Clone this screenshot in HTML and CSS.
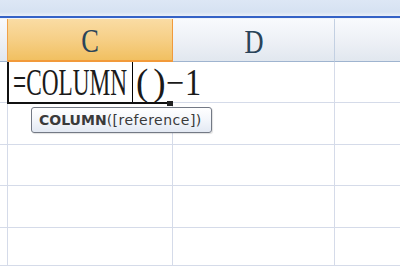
FILE: index.html
```html
<!DOCTYPE html>
<html>
<head>
<meta charset="utf-8">
<link rel="stylesheet" href="styles.css">
</head>
<body>
<div class="sheet">
  <div class="ribbon"></div>
  <div class="grid">
    <div class="cell hd"></div>
    <div class="cell hd hd-sel"><span class="hl">C</span></div>
    <div class="cell hd"><span class="hl">D</span></div>
    <div class="cell hd hd-last"></div>

    <div class="cell"></div>
    <div class="cell c-edit">
      <div class="entry">
        <span class="seg s1"><span class="sq">=COLUMN</span></span>
        <span class="caret"></span>
        <span class="seg s2"><span>(</span><span>)</span></span>
        <span class="seg s3"><span class="sq3">−1</span></span>
      </div>
    </div>
    <div class="cell"></div>
    <div class="cell last"></div>

    <div class="cell"></div><div class="cell"></div><div class="cell"></div><div class="cell last"></div>
    <div class="cell"></div><div class="cell"></div><div class="cell"></div><div class="cell last"></div>
    <div class="cell"></div><div class="cell"></div><div class="cell"></div><div class="cell last"></div>
    <div class="cell"></div><div class="cell"></div><div class="cell"></div><div class="cell last"></div>
  </div>

  <div class="active"></div>
  <div class="handle"></div>
  <div class="tip"><b>COLUMN</b><span class="args">([reference])</span></div>
</div>
</body>
</html>
```

FILE: styles.css
```css
html, body {
  margin: 0;
  padding: 0;
  background: #ffffff;
}
.sheet {
  position: relative;
  width: 400px;
  height: 266px;
  overflow: hidden;
  background: #ffffff;
}
.ribbon {
  height: 16px;
  background: linear-gradient(#dde7f5, #d6e2f2 75%, #e9eff8);
  border-bottom: 2px solid #3462c6;
  box-shadow: 0 1px 0 #eef3fa;
  margin-bottom: 1px;
}
.grid {
  display: grid;
  grid-template-columns: 8px 165px 162px 1fr;
  grid-template-rows: 43px 41px 42px 41px 42px 1fr;
  height: 247px;
}
.cell {
  box-sizing: border-box;
  border-right: 1px solid #d5dbe9;
  border-bottom: 1px solid #d5dbe9;
}
.cell.last {
  border-right: none;
}
.hd {
  background: linear-gradient(#f8fafd, #eef1f6 50%, #e1e7ef);
  border-right: 1px solid #c3d0e2;
  border-bottom: 1px solid #9fb4cf;
  display: flex;
  align-items: center;
  justify-content: center;
}
.hd:first-child {
  border-right: 1px solid #f0a24a;
}
.hd-last {
  border-right: none;
}
.hd-sel {
  background: linear-gradient(#fadca4, #f6cf86 50%, #f1c061);
  border-right: 1px solid #f09a3c;
  border-bottom: 2px solid #f29a3a;
}
.hl {
  font-family: "Liberation Serif", serif;
  font-size: 33px;
  line-height: 33px;
  color: #2a4459;
  display: inline-block;
  transform: scaleX(0.8);
  padding-top: 4px;
}
.c-edit {
  border-right-color: transparent;
  position: relative;
  z-index: 2;
}
.entry {
  display: flex;
  align-items: stretch;
  height: 40px;
  padding-left: 5px;
  white-space: nowrap;
  font-family: "Liberation Serif", serif;
  font-size: 37px;
  line-height: 40px;
  color: #1a1a1a;
}
.seg {
  display: block;
  padding-top: 1px;
  flex: none;
}
.s1 {
  width: 119px;
}
.sq {
  display: inline-block;
  transform: scaleX(0.63);
  transform-origin: 0 0;
}
.caret {
  display: block;
  flex: none;
  width: 1px;
  height: 41px;
  background: #000000;
}
.s2 {
  display: flex;
  gap: 5px;
  box-sizing: border-box;
  padding-left: 3px;
  width: 33px;
}
.s3 {
  width: 34px;
}
.sq3 {
  display: inline-block;
  letter-spacing: 1px;
  transform: scaleX(0.87);
  transform-origin: 0 0;
}
.active {
  position: absolute;
  left: 7px;
  top: 62px;
  width: 160px;
  height: 42px;
  box-sizing: border-box;
  border-left: 2px solid #111;
  border-bottom: 2px solid #111;
  z-index: 3;
}
.handle {
  position: absolute;
  left: 167px;
  top: 101px;
  width: 6px;
  height: 5px;
  background: #222;
  z-index: 4;
}
.tip {
  position: absolute;
  left: 31px;
  top: 107px;
  width: 181px;
  height: 26px;
  box-sizing: border-box;
  border: 1px solid #737985;
  border-radius: 3px;
  background: linear-gradient(#ffffff, #f3f6fb 50%, #e3e9f3);
  box-shadow: 1px 1px 1px rgba(0,0,0,0.12);
  font-family: "DejaVu Sans", sans-serif;
  font-size: 14px;
  line-height: 24px;
  color: #3a3a3a;
  padding-left: 7px;
  white-space: nowrap;
  z-index: 5;
}
.tip b {
  font-weight: bold;
}
.args {
  letter-spacing: 0.5px;
}
```
